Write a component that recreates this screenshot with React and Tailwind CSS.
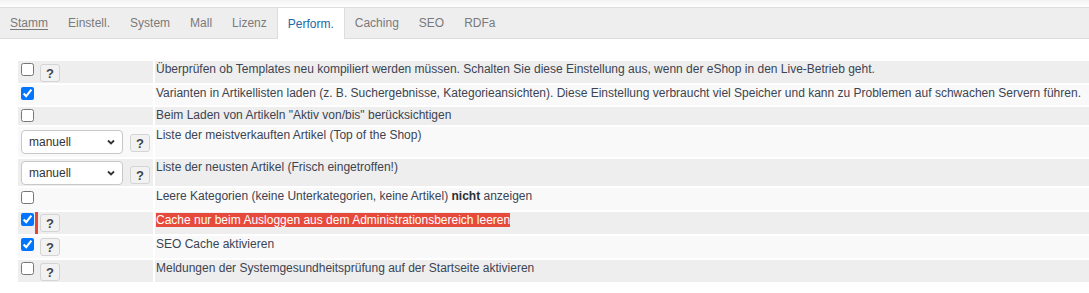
import React from 'react';

const TABS = ['Stamm', 'Einstell.', 'System', 'Mall', 'Lizenz', 'Perform.', 'Caching', 'SEO', 'RDFa'];

const ROWS = [
  { kind: 'check', checked: false, help: true, bg: 'bg-[#eeeeee]', h: 'h-[22px]', cb: 'mt-[2px]', btn: 'mt-[3px]',
    text: 'Überprüfen ob Templates neu kompiliert werden müssen. Schalten Sie diese Einstellung aus, wenn der eShop in den Live-Betrieb geht.' },
  { kind: 'check', checked: true, help: false, bg: 'bg-[#f9f9f9]', h: 'h-[20px]', cb: 'mt-[2px]',
    text: 'Varianten in Artikellisten laden (z. B. Suchergebnisse, Kategorieansichten). Diese Einstellung verbraucht viel Speicher und kann zu Problemen auf schwachen Servern führen.' },
  { kind: 'check', checked: false, help: false, bg: 'bg-[#eeeeee]', h: 'h-[18px]', cb: 'mt-[2px]',
    text: 'Beim Laden von Artikeln "Aktiv von/bis" berücksichtigen' },
  { kind: 'select', help: true, bg: 'bg-[#f9f9f9]', h: 'h-[30px]', cb: 'mt-[3px]', btn: 'mt-[7px]',
    text: 'Liste der meistverkauften Artikel (Top of the Shop)' },
  { kind: 'select', help: true, bg: 'bg-[#eeeeee]', h: 'h-[27px]', cb: 'mt-[2px]', btn: 'mt-[7px]',
    text: 'Liste der neusten Artikel (Frisch eingetroffen!)' },
  { kind: 'check', checked: false, help: false, bg: 'bg-[#f9f9f9]', h: 'h-[22px]', cb: 'mt-[3px]', bold: true },
  { kind: 'check', checked: true, help: true, mark: true, bg: 'bg-[#eeeeee]', h: 'h-[22px]', cb: 'mt-[1px]', btn: 'mt-[2px]',
    text: 'Cache nur beim Ausloggen aus dem Administrationsbereich leeren' },
  { kind: 'check', checked: true, help: true, bg: 'bg-[#f9f9f9]', h: 'h-[22px]', cb: 'mt-[2px]', btn: 'mt-[2px]',
    text: 'SEO Cache aktivieren' },
  { kind: 'check', checked: false, help: true, bg: 'bg-[#eeeeee]', h: 'h-[22px]', cb: 'mt-[2px]', btn: 'mt-[3px]',
    text: 'Meldungen der Systemgesundheitsprüfung auf der Startseite aktivieren' },
];

const HelpButton = ({ className }) => (
  <button
    type="button"
    className={`w-[20px] h-[18px] flex items-center justify-center rounded-[3px] border border-[#d4d4d4] bg-[#f2f2f2] text-[#40454d] text-[13px] font-bold leading-none ${className}`}
  >
    ?
  </button>
);

const FakeSelect = ({ className }) => (
  <div className={`w-[102px] h-[24px] flex items-center justify-between pl-[7px] pr-[6px] rounded-[4px] border border-[#c8c8c8] bg-white text-[12px] text-[#333] ${className}`}>
    <span>manuell</span>
    <svg width="8" height="6" viewBox="0 0 8 6" className="mr-[1px]">
      <polyline points="1,1.5 4,4.5 7,1.5" fill="none" stroke="#333" strokeWidth="1.8" />
    </svg>
  </div>
);

export default function App() {
  return (
    <div className="w-[1089px] h-[293px] bg-white overflow-hidden text-[12px] text-[#3c4452]" style={{ fontFamily: '"Liberation Sans", Arial, sans-serif' }}>
      {/* top shade */}
      <div className="h-[7px] bg-gradient-to-b from-[#f3f3f3] to-white" />

      {/* Tab bar */}
      <div className="h-[32px] flex items-stretch bg-[#eeeeee] border-y border-[#dddddd]">
        {TABS.map((tab) =>
          tab === 'Perform.' ? (
            <div key={tab} className="-mb-[1px] px-[10px] flex items-center bg-white border-x border-[#dddddd] text-[#2168a6]">
              {tab}
            </div>
          ) : (
            <div key={tab} className={`px-[10px] flex items-center text-[#7a7a7a] ${tab === 'Stamm' ? 'underline underline-offset-2 text-[#6d6d6d]' : ''}`}>
              {tab}
            </div>
          )
        )}
      </div>

      {/* Settings table */}
      <div className="mt-[22px] pl-[18px] flex flex-col gap-[2px]">
        {ROWS.map((row, i) => (
          <div key={i} className={`flex gap-[2px] ${row.h}`}>
            <div className={`w-[135px] shrink-0 flex items-start pl-[3px] ${row.bg}`}>
              {row.kind === 'check' ? (
                <input type="checkbox" defaultChecked={row.checked} className={`m-0 w-[13px] h-[13px] ${row.cb}`} />
              ) : (
                <FakeSelect className={row.cb} />
              )}
              {row.kind === 'check' && row.mark && (
                <div className="ml-[1px] mr-[2px] w-[3px] self-stretch bg-[#e2473a]" />
              )}
              {row.kind === 'check' && row.help && !row.mark && <div className="w-[6px]" />}
              {row.kind === 'select' && <div className="w-[7px]" />}
              {row.help && <HelpButton className={row.btn} />}
            </div>
            <div className={`flex-1 pl-[1px] pt-[1px] leading-[14px] whitespace-nowrap overflow-hidden ${row.bg}`}>
              {row.bold ? (
                <span>Leere Kategorien (keine Unterkategorien, keine Artikel) <b className="text-[#2b2f36]">nicht</b> anzeigen</span>
              ) : row.mark ? (
                <span className="bg-[#e64a3b] text-white">{row.text}</span>
              ) : (
                <span>{row.text}</span>
              )}
            </div>
          </div>
        ))}
      </div>
    </div>
  );
}
